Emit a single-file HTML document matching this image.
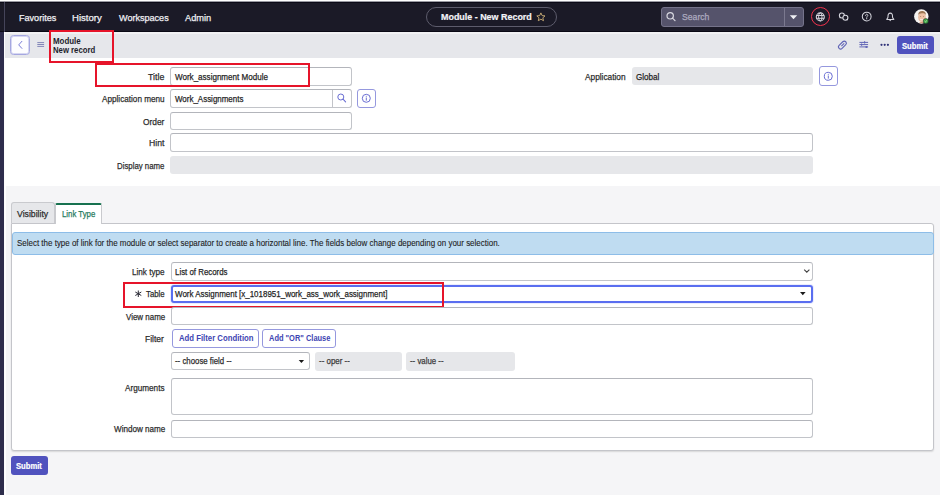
<!DOCTYPE html>
<html><head><meta charset="utf-8">
<style>
*{box-sizing:border-box;margin:0;padding:0}
html,body{width:940px;height:495px;overflow:hidden;background:#fff;font-family:"Liberation Sans",sans-serif}
.a,.t{position:absolute}
.t{white-space:nowrap;transform-origin:0 0;-webkit-text-stroke:0.25px currentColor}
.inp{position:absolute;border:1px solid #c2c4c9;border-top-color:#b3b5bb;border-radius:3px;background:#fff}
.ro{position:absolute;background:#e6e7ea;border-radius:3px}
.ib{position:absolute;border:1px solid #9598de;border-radius:3px;background:#fff}
.red{position:absolute;border:2px solid #e6142a}
svg{position:absolute;overflow:visible}
</style></head><body>
<!-- top chrome -->
<div class="a" style="left:0;top:0;width:940px;height:1px;background:#ffffff"></div>
<div class="a" style="left:0;top:1px;width:940px;height:1px;background:#9a9aa2"></div>
<div class="a" style="left:0;top:2px;width:940px;height:30px;background:#1b1a27"></div>
<div class="a" style="left:0;top:2px;width:940px;height:1px;background:#0b0a17"></div>
<div class="a" style="left:0;top:31px;width:940px;height:1px;background:#0a0914"></div>
<div class="a" style="left:4px;top:2px;width:1px;height:30px;background:#45445a"></div>
<!-- left strip -->
<div class="a" style="left:0;top:32px;width:4px;height:463px;background:#2e2d4c"></div>
<div class="a" style="left:4px;top:32px;width:1.3px;height:463px;background:#fbfbfc"></div>
<!-- sub bar -->
<div class="a" style="left:5.3px;top:32px;width:935px;height:26.4px;background:#e6e7eb;border-top:2px solid #f1f1f3"></div>
<!-- gray bottom -->
<div class="a" style="left:6.2px;top:186px;width:934px;height:309px;background:#f5f5f7"></div>

<!-- pill -->
<div class="a" style="left:426px;top:7px;width:131px;height:20px;border:1.5px solid #5d5c6c;border-radius:10px"></div>
<svg style="left:536px;top:12px" width="10" height="10" viewBox="0 0 10 10"><path d="M4.9 .9 6.1 3.6 9 3.9 6.8 5.8 7.5 8.7 4.9 7.2 2.3 8.7 3 5.8 .8 3.9 3.7 3.6Z" fill="none" stroke="#cdb077" stroke-width="0.9" stroke-linejoin="round"/></svg>

<!-- search -->
<div class="a" style="left:661px;top:7px;width:143px;height:20px;background:#55536b;border:1px solid #75738a;border-radius:3px"></div>
<div class="a" style="left:784px;top:8px;width:1px;height:18px;background:#7b798f"></div>
<svg style="left:665px;top:11px" width="12" height="12" viewBox="0 0 12 12"><circle cx="5.2" cy="4.8" r="3.2" fill="none" stroke="#d8d8e0" stroke-width="1.2"/><path d="M7.5 7.1 10 9.6" stroke="#d8d8e0" stroke-width="1.3" stroke-linecap="round"/></svg>
<svg style="left:789px;top:14px" width="9" height="6" viewBox="0 0 9 6"><path d="M.8 1.2H8.2L4.5 5.2Z" fill="#f0f0f4"/></svg>

<!-- header icons -->
<div class="a" style="left:810.6px;top:7.1px;width:19.1px;height:19.1px;border:1.7px solid #f0324c;border-radius:50%"></div>
<svg style="left:815px;top:12px" width="11" height="10" viewBox="0 0 11 10"><circle cx="5.3" cy="4.9" r="4.0" fill="none" stroke="#d4d4dc" stroke-width="1.1"/><ellipse cx="5.3" cy="4.9" rx="1.7" ry="4.0" fill="none" stroke="#d4d4dc" stroke-width="1"/><path d="M1.5 3.5H9.1M1.5 6.3H9.1" stroke="#d4d4dc" stroke-width="1"/></svg>
<svg style="left:835px;top:9px" width="18" height="16" viewBox="0 0 18 16"><circle cx="6.9" cy="6.5" r="2.5" fill="none" stroke="#d4d4dc" stroke-width="1.1"/><path d="M4.5 7.6 4.8 9.4 6.4 8.6Z" fill="#d4d4dc"/><circle cx="10.4" cy="8.7" r="2.5" fill="#1b1a27" stroke="#d4d4dc" stroke-width="1.1"/><path d="M12.8 9.8 12.5 11.6 10.9 10.8Z" fill="#d4d4dc"/></svg>
<svg style="left:861px;top:11px" width="12" height="12" viewBox="0 0 12 12"><circle cx="5.7" cy="5.6" r="4.4" fill="none" stroke="#d4d4dc" stroke-width="1.05"/><path d="M4.6 4.5c0-.7.5-1.2 1.1-1.2s1.1.5 1.1 1.1c0 .8-1.1 1-1.1 1.9" fill="none" stroke="#d4d4dc" stroke-width="1" stroke-linecap="round"/><circle cx="5.7" cy="7.7" r=".6" fill="#d4d4dc"/></svg>
<svg style="left:885px;top:11px" width="11" height="11" viewBox="0 0 11 11"><path d="M5.25 2.1C3.6 2.1 3 3.5 3 4.9V6.1C3 7 2.2 7.7 1.7 8.4H8.8C8.3 7.7 7.5 7 7.5 6.1V4.9C7.5 3.5 6.9 2.1 5.25 2.1Z" fill="none" stroke="#d4d4dc" stroke-width="1.05" stroke-linejoin="round"/><path d="M4.4 9.2Q5.25 10.1 6.1 9.2" fill="none" stroke="#d4d4dc" stroke-width="1"/></svg>
<!-- avatar -->
<svg style="left:913.5px;top:9.2px" width="16" height="16" viewBox="0 0 16 16">
<defs><clipPath id="cp"><circle cx="7.3" cy="7.5" r="7.1"/></clipPath></defs>
<circle cx="7.3" cy="7.5" r="7.2" fill="#f6f4f2"/>
<g clip-path="url(#cp)">
<ellipse cx="8" cy="8.3" rx="3.9" ry="5" fill="#edc2a6"/>
<path d="M4.2 6.2C4 3.2 5.8 2.1 8 2.1s4.1 1.1 3.9 4.1C11.3 4.6 10 4.2 8 4.3S4.8 4.7 4.2 6.2Z" fill="#9d7653"/>
<path d="M6.2 10.3c.9.6 2.4.6 3.3 0" stroke="#fbf4ee" stroke-width="1" fill="none"/>
<ellipse cx="6.6" cy="7.6" rx=".6" ry=".4" fill="#8a5f4a"/><ellipse cx="9.5" cy="7.6" rx=".6" ry=".4" fill="#8a5f4a"/>
<path d="M4 16C4.6 13.6 6 13 8 13s3.4.6 4 3Z" fill="#d59a7e"/>
</g>
<circle cx="11.8" cy="12.1" r="2.6" fill="#3ea544" stroke="#1b1a27" stroke-width=".5"/>
<path d="M10.7 12.1l.8.7 1.4-1.3" stroke="#d8f5d8" stroke-width=".7" fill="none"/>
</svg>

<!-- sub bar contents -->
<div class="a" style="left:10px;top:35.2px;width:19.8px;height:19.6px;border:1px solid #a5a7e0;border-radius:3.5px;background:#fdfdff;box-shadow:inset 0 0 0 1px #d6d7f2"></div>
<svg style="left:17px;top:40px" width="7" height="10" viewBox="0 0 7 10"><path d="M4.9 1.3 1.7 4.9 4.9 8.4" fill="none" stroke="#7275d4" stroke-width="0.95" stroke-linecap="round" stroke-linejoin="round"/></svg>
<svg style="left:37px;top:42px" width="8" height="6" viewBox="0 0 8 6"><path d="M.3 .6H7.1M.3 2.5H7.1M.3 4.4H7.1" stroke="#8286b8" stroke-width="1"/></svg>
<div class="red" style="left:49px;top:30px;width:65px;height:33px"></div>

<svg style="left:837px;top:40px" width="11" height="11" viewBox="0 0 11 11"><g transform="rotate(45 5.5 5)"><rect x="3.4" y="0.4" width="4.2" height="9.4" rx="2.1" fill="none" stroke="#6064b6" stroke-width="1.1"/><path d="M5.5 2.6V6.6" stroke="#6064b6" stroke-width="1"/></g></svg>
<svg style="left:859px;top:41px" width="10" height="9" viewBox="0 0 10 9"><path d="M.4 1.4H9.1M.4 3.6H9.1M.4 5.9H9.1" stroke="#6064b6" stroke-width="1"/><path d="M5.6 .2V2.6M2.6 2.4V4.8" stroke="#6064b6" stroke-width="1.1"/><circle cx="7.4" cy="6" r="1.1" fill="#6064b6"/></svg>
<svg style="left:880px;top:43px" width="10" height="4" viewBox="0 0 10 4"><circle cx="1.5" cy="1.8" r="1.1" fill="#2f3278"/><circle cx="4.7" cy="1.8" r="1.1" fill="#2f3278"/><circle cx="7.9" cy="1.8" r="1.1" fill="#2f3278"/></svg>
<div class="a" style="left:897px;top:35.7px;width:37px;height:18.5px;background:#5052be;border-radius:3px"></div>

<!-- top form -->
<div class="inp" style="left:170px;top:67px;width:181.5px;height:18.5px"></div>
<div class="red" style="left:95px;top:63px;width:214.5px;height:24px"></div>

<div class="inp" style="left:170px;top:89.3px;width:181.5px;height:18.3px"></div>
<div class="a" style="left:332.3px;top:90px;width:1px;height:17px;background:#c2c4c9"></div>
<svg style="left:336px;top:92px" width="11" height="11" viewBox="0 0 11 11"><circle cx="4.8" cy="5" r="3" fill="none" stroke="#6a6ed3" stroke-width="1"/><path d="M7 7.2 9.6 9.9" stroke="#6a6ed3" stroke-width="1.1" stroke-linecap="round"/></svg>
<div class="ib" style="left:357px;top:89px;width:18.8px;height:18.7px"></div>
<svg style="left:361px;top:93px" width="11" height="11" viewBox="0 0 11 11"><circle cx="5.3" cy="5.3" r="4" fill="none" stroke="#6a6ed3" stroke-width="1"/><path d="M5.3 4.5V7.6" stroke="#6a6ed3" stroke-width="1"/><circle cx="5.3" cy="3.2" r=".55" fill="#6a6ed3"/></svg>

<div class="inp" style="left:170px;top:111.8px;width:181.5px;height:18px"></div>
<div class="inp" style="left:170px;top:133.4px;width:643px;height:18.4px"></div>
<div class="ro" style="left:170px;top:155.7px;width:643px;height:18px"></div>

<div class="ro" style="left:632px;top:66.8px;width:181px;height:18.2px"></div>
<div class="ib" style="left:818.6px;top:66.2px;width:19.2px;height:19.4px"></div>
<svg style="left:823px;top:70.5px" width="11" height="11" viewBox="0 0 11 11"><circle cx="5.3" cy="5.3" r="4" fill="none" stroke="#6a6ed3" stroke-width="1"/><path d="M5.3 4.5V7.6" stroke="#6a6ed3" stroke-width="1"/><circle cx="5.3" cy="3.2" r=".55" fill="#6a6ed3"/></svg>

<!-- tabs + panel -->
<div class="a" style="left:10.7px;top:223px;width:923.3px;height:227.5px;background:#fff;border:1px solid #c4c5ca;border-radius:0 3px 3px 3px;box-shadow:0 1px 1.5px rgba(0,0,0,.12)"></div>
<div class="a" style="left:10.7px;top:202.3px;width:44.6px;height:20.9px;background:#e6e7ea;border:1px solid #c9cace;border-bottom:none;border-radius:3px 3px 0 0"></div>
<div class="a" style="left:54.8px;top:202.8px;width:46.8px;height:21px;background:#fff;border:1px solid #c9cace;border-top:2.3px solid #17714f;border-bottom:none;border-radius:2px 2px 0 0"></div>

<div class="a" style="left:11.6px;top:231.8px;width:922.3px;height:22.8px;background:#bfdcf1;border:1px solid #8dbde8;border-radius:3px"></div>

<div class="inp" style="left:170.7px;top:262.3px;width:642.2px;height:18.5px"></div>
<svg style="left:803px;top:268px" width="8" height="6" viewBox="0 0 8 6"><path d="M1.2 1.6 3.8 4.2 6.4 1.6" fill="none" stroke="#444" stroke-width="1.1"/></svg>
<div class="a" style="left:170.7px;top:284.5px;width:642.2px;height:18.3px;border:2px solid #5a6ef0;border-radius:3px;background:#fff;box-shadow:0 0 0 1px rgba(90,110,240,.12)"></div>
<svg style="left:799px;top:291px" width="8" height="6" viewBox="0 0 8 6"><path d="M1 .9H6.6L3.8 4.3Z" fill="#1a1a1a"/></svg>
<svg style="left:134px;top:290.2px" width="9" height="8" viewBox="0 0 9 8"><path d="M4.3 .5V7M1.3 2 7.3 5.5M1.3 5.5 7.3 2" stroke="#2a2a36" stroke-width="1"/></svg>
<div class="red" style="left:123px;top:282.2px;width:321.3px;height:25.8px"></div>

<div class="inp" style="left:170.6px;top:307.2px;width:642px;height:18px"></div>

<div class="ib" style="left:172px;top:329px;width:87.1px;height:18.5px"></div>
<div class="ib" style="left:262.2px;top:329px;width:73.8px;height:18.5px"></div>

<div class="inp" style="left:170.9px;top:352.4px;width:139.6px;height:18px"></div>
<svg style="left:297.5px;top:359px" width="7" height="5" viewBox="0 0 7 5"><path d="M.7 .9H6.1L3.4 4Z" fill="#1a1a1a"/></svg>
<div class="ro" style="left:314.8px;top:352.4px;width:87.3px;height:18.3px"></div>
<div class="ro" style="left:405.7px;top:352.4px;width:109.3px;height:18.3px"></div>

<div class="inp" style="left:171px;top:378.4px;width:641.5px;height:37.1px"></div>
<div class="inp" style="left:171px;top:419.7px;width:641.5px;height:18.5px"></div>

<div class="a" style="left:10.7px;top:456.1px;width:37.1px;height:18.8px;background:#5052be;border-radius:3px"></div>

<div class="t" style="left:18.70px;top:12.54px;font-size:9.6px;line-height:9.6px;color:#f0f0f4;transform:scaleX(0.9449)">Favorites</div>
<div class="t" style="left:72.20px;top:12.54px;font-size:9.6px;line-height:9.6px;color:#f0f0f4;transform:scaleX(0.9978)">History</div>
<div class="t" style="left:118.80px;top:12.54px;font-size:9.6px;line-height:9.6px;color:#f0f0f4;transform:scaleX(0.9442)">Workspaces</div>
<div class="t" style="left:184.90px;top:12.54px;font-size:9.6px;line-height:9.6px;color:#f0f0f4;transform:scaleX(0.9663)">Admin</div>
<div class="t" style="left:440.90px;top:12.08px;font-size:9.9px;line-height:9.9px;font-weight:bold;color:#f4f4f8;transform:scaleX(0.9040);-webkit-text-stroke:0.2px currentColor">Module - New Record</div>
<div class="t" style="left:681.70px;top:12.44px;font-size:9.6px;line-height:9.6px;color:#aeacc0;transform:scaleX(0.9009)">Search</div>
<div class="t" style="left:902.30px;top:41.62px;font-size:8.8px;line-height:8.8px;font-weight:bold;color:#ffffff;transform:scaleX(0.8685);-webkit-text-stroke:0.2px currentColor">Submit</div>
<div class="t" style="left:52.90px;top:36.86px;font-size:8.4px;line-height:8.4px;font-weight:bold;color:#1d1d2b;transform:scaleX(0.9456);-webkit-text-stroke:0">Module</div>
<div class="t" style="left:52.90px;top:45.56px;font-size:8.4px;line-height:8.4px;font-weight:bold;color:#1d1d2b;transform:scaleX(0.9247);-webkit-text-stroke:0">New record</div>
<div class="t" style="left:148.00px;top:71.52px;font-size:9.5px;line-height:9.5px;color:#2c2c2c;transform:scaleX(0.9265)">Title</div>
<div class="t" style="left:174.80px;top:71.52px;font-size:9.5px;line-height:9.5px;color:#1f1f1f;transform:scaleX(0.8472)">Work_assignment Module</div>
<div class="t" style="left:101.80px;top:93.92px;font-size:9.5px;line-height:9.5px;color:#2c2c2c;transform:scaleX(0.8590)">Application menu</div>
<div class="t" style="left:175.00px;top:93.92px;font-size:9.5px;line-height:9.5px;color:#1f1f1f;transform:scaleX(0.8376)">Work_Assignments</div>
<div class="t" style="left:143.00px;top:116.52px;font-size:9.5px;line-height:9.5px;color:#2c2c2c;transform:scaleX(0.8813)">Order</div>
<div class="t" style="left:148.80px;top:138.43px;font-size:9.5px;line-height:9.5px;color:#2c2c2c;transform:scaleX(0.9117)">Hint</div>
<div class="t" style="left:116.80px;top:160.53px;font-size:9.5px;line-height:9.5px;color:#2c2c2c;transform:scaleX(0.8236)">Display name</div>
<div class="t" style="left:585.30px;top:71.52px;font-size:9.5px;line-height:9.5px;color:#2c2c2c;transform:scaleX(0.8736)">Application</div>
<div class="t" style="left:636.20px;top:71.52px;font-size:9.5px;line-height:9.5px;color:#1f1f1f;transform:scaleX(0.8520)">Global</div>
<div class="t" style="left:17.00px;top:208.93px;font-size:9.5px;line-height:9.5px;color:#2c2c2c;transform:scaleX(0.9138)">Visibility</div>
<div class="t" style="left:61.70px;top:208.93px;font-size:9.5px;line-height:9.5px;color:#1f7a5c;transform:scaleX(0.8224)">Link Type</div>
<div class="t" style="left:17.20px;top:238.85px;font-size:9.0px;line-height:9.0px;color:#222222;transform:scaleX(0.8856);-webkit-text-stroke:0.1px currentColor">Select the type of link for the module or select separator to create a horizontal line. The fields below change depending on your selection.</div>
<div class="t" style="left:132.20px;top:266.73px;font-size:9.5px;line-height:9.5px;color:#2c2c2c;transform:scaleX(0.8548)">Link type</div>
<div class="t" style="left:174.90px;top:266.73px;font-size:9.5px;line-height:9.5px;color:#1f1f1f;transform:scaleX(0.8287)">List of Records</div>
<div class="t" style="left:146.00px;top:289.32px;font-size:9.5px;line-height:9.5px;color:#2c2c2c;transform:scaleX(0.8233)">Table</div>
<div class="t" style="left:174.70px;top:289.32px;font-size:9.5px;line-height:9.5px;color:#1f1f1f;transform:scaleX(0.8386)">Work Assignment [x_1018951_work_ass_work_assignment]</div>
<div class="t" style="left:125.50px;top:311.53px;font-size:9.5px;line-height:9.5px;color:#2c2c2c;transform:scaleX(0.8372)">View name</div>
<div class="t" style="left:145.40px;top:333.53px;font-size:9.5px;line-height:9.5px;color:#2c2c2c;transform:scaleX(0.8954)">Filter</div>
<div class="t" style="left:178.60px;top:333.85px;font-size:9.0px;line-height:9.0px;font-weight:bold;color:#3d44b2;transform:scaleX(0.8615);-webkit-text-stroke:0">Add Filter Condition</div>
<div class="t" style="left:268.60px;top:333.85px;font-size:9.0px;line-height:9.0px;font-weight:bold;color:#3d44b2;transform:scaleX(0.8292);-webkit-text-stroke:0">Add &quot;OR&quot; Clause</div>
<div class="t" style="left:175.20px;top:356.32px;font-size:9.5px;line-height:9.5px;color:#2a2a2a;transform:scaleX(0.8246)">-- choose field --</div>
<div class="t" style="left:318.80px;top:356.32px;font-size:9.5px;line-height:9.5px;color:#3a3a3a;transform:scaleX(0.8337)">-- oper --</div>
<div class="t" style="left:409.70px;top:356.32px;font-size:9.5px;line-height:9.5px;color:#3a3a3a;transform:scaleX(0.8243)">-- value --</div>
<div class="t" style="left:125.30px;top:383.12px;font-size:9.5px;line-height:9.5px;color:#2c2c2c;transform:scaleX(0.8600)">Arguments</div>
<div class="t" style="left:113.50px;top:424.43px;font-size:9.5px;line-height:9.5px;color:#2c2c2c;transform:scaleX(0.8523)">Window name</div>
<div class="t" style="left:16.40px;top:462.12px;font-size:8.8px;line-height:8.8px;font-weight:bold;color:#ffffff;transform:scaleX(0.8685);-webkit-text-stroke:0.2px currentColor">Submit</div>
</body></html>
